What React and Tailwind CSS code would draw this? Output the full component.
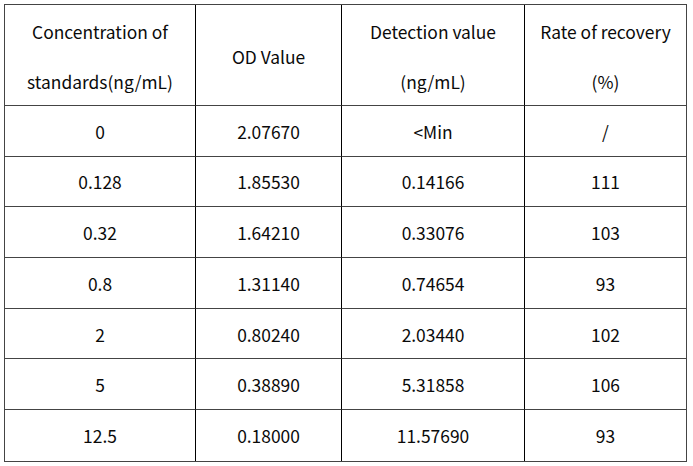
import React from 'react';

const rows = [
  ['0', '2.07670', '<Min', '/'],
  ['0.128', '1.85530', '0.14166', '111'],
  ['0.32', '1.64210', '0.33076', '103'],
  ['0.8', '1.31140', '0.74654', '93'],
  ['2', '0.80240', '2.03440', '102'],
  ['5', '0.38890', '5.31858', '106'],
  ['12.5', '0.18000', '11.57690', '93'],
];

const header = [
  ['Concentration of', 'standards(ng/mL)'],
  ['OD Value'],
  ['Detection value', '(ng/mL)'],
  ['Rate of recovery', '(%)'],
];

export default function App() {
  return (
    <div
      className="w-[693px] h-[466px] bg-white pt-[4px] pl-[4px]"
      style={{ fontFamily: '"Noto Sans CJK SC", "Noto Sans", sans-serif' }}
    >
      <div className="w-[683px] border border-[#444] grid grid-cols-[191px_146px_183px_161px] text-[17.4px] text-[#0a0a0a]">
        {header.map((lines, i) => (
          <div
            key={i}
            className={`h-[101px] pt-[3px] flex flex-col items-center justify-center leading-[50px] border-b border-[#444] ${i < 3 ? 'border-r border-r-black' : ''}`}
          >
            {lines.map((l) => (
              <span key={l}>{l}</span>
            ))}
          </div>
        ))}
        {rows.map((r, ri) =>
          r.map((c, ci) => (
            <div
              key={ri + '-' + ci}
              className={`h-[50.7px] pt-[2px] flex items-center justify-center ${ri < rows.length - 1 ? 'border-b border-[#444]' : ''} ${ci < 3 ? 'border-r border-r-black' : ''}`}
            >
              {c}
            </div>
          ))
        )}
      </div>
    </div>
  );
}
